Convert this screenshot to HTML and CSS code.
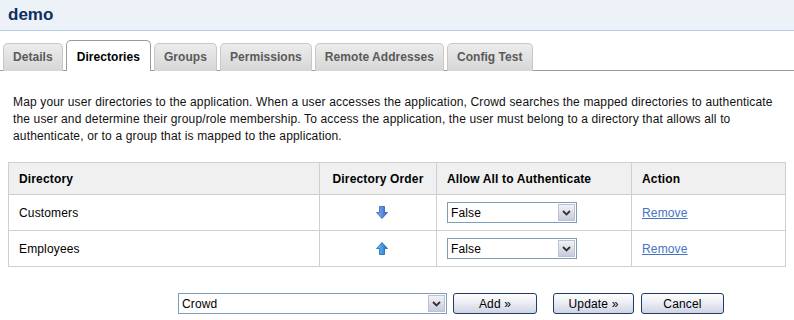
FILE: index.html
```html
<!DOCTYPE html>
<html lang="en">
<head>
  <meta charset="UTF-8" />
  <title>demo - Directories</title>
  <link rel="stylesheet" href="styles.css">
</head>
<body>
  <header class="title-bar">
    <h1>demo</h1>
  </header>

  <ul class="tabs">
    <li><a href="#">Details</a></li>
    <li class="active"><a href="#">Directories</a></li>
    <li><a href="#">Groups</a></li>
    <li><a href="#">Permissions</a></li>
    <li><a href="#">Remote Addresses</a></li>
    <li><a href="#">Config Test</a></li>
  </ul>

  <main>
    <p class="intro">Map your user directories to the application. When a user accesses the application, Crowd searches the mapped directories to authenticate the user and determine their group/role membership. To access the application, the user must belong to a directory that allows all to authenticate, or to a group that is mapped to the application.</p>

    <table class="dirs">
      <thead>
        <tr>
          <th class="col-name">Directory</th>
          <th class="col-order">Directory Order</th>
          <th class="col-allow">Allow All to Authenticate</th>
          <th class="col-action">Action</th>
        </tr>
      </thead>
      <tbody>
        <tr>
          <td>Customers</td>
          <td class="order">
            <svg width="12" height="13" viewBox="0 0 12 13">
              <defs>
                <linearGradient id="gdown" x1="0" y1="0" x2="1" y2="0">
                  <stop offset="0" stop-color="#8fb8ec"/>
                  <stop offset="1" stop-color="#2a64c4"/>
                </linearGradient>
              </defs>
              <path d="M3.5 0.5 H8.5 V6.5 H11.5 L6 12.5 L0.5 6.5 H3.5 Z" fill="url(#gdown)" stroke="#2b5fb5" stroke-width="0.8"/>
            </svg>
          </td>
          <td>
            <div class="select small">
              <select><option>False</option><option>True</option></select>
              <span class="select-btn"><svg width="9" height="6" viewBox="0 0 9 6"><path d="M1 1 L4.5 4.5 L8 1" fill="none" stroke="#333" stroke-width="1.8"/></svg></span>
            </div>
          </td>
          <td><a class="remove" href="#">Remove</a></td>
        </tr>
        <tr>
          <td>Employees</td>
          <td class="order">
            <svg width="12" height="13" viewBox="0 0 12 13">
              <defs>
                <linearGradient id="gup" x1="0" y1="0" x2="1" y2="0">
                  <stop offset="0" stop-color="#7cc4f2"/>
                  <stop offset="1" stop-color="#1670c8"/>
                </linearGradient>
              </defs>
              <path d="M6 0.5 L11.5 6.5 H8.5 V12.5 H3.5 V6.5 H0.5 Z" fill="url(#gup)" stroke="#1c63b0" stroke-width="0.8"/>
            </svg>
          </td>
          <td>
            <div class="select small">
              <select><option>False</option><option>True</option></select>
              <span class="select-btn"><svg width="9" height="6" viewBox="0 0 9 6"><path d="M1 1 L4.5 4.5 L8 1" fill="none" stroke="#333" stroke-width="1.8"/></svg></span>
            </div>
          </td>
          <td><a class="remove" href="#">Remove</a></td>
        </tr>
      </tbody>
    </table>

    <form class="add-form">
      <div class="select wide">
        <select><option>Crowd</option></select>
        <span class="select-btn"><svg width="9" height="6" viewBox="0 0 9 6"><path d="M1 1 L4.5 4.5 L8 1" fill="none" stroke="#333" stroke-width="1.8"/></svg></span>
      </div>
      <button type="button" class="btn btn-add">Add &raquo;</button>
      <button type="button" class="btn btn-update">Update &raquo;</button>
      <button type="button" class="btn btn-cancel">Cancel</button>
    </form>
  </main>
</body>
</html>
```

FILE: styles.css
```css
* {
  box-sizing: border-box;
  margin: 0;
  padding: 0;
}

body {
  font-family: 'Liberation Sans', Arial, sans-serif;
  font-size: 12px;
  letter-spacing: 0.15px;
  color: #000;
  background: #fff;
}

.title-bar {
  height: 31px;
  background: #edf1f8;
  border-bottom: 1px solid #b8cde6;
  padding: 0 8px;
  display: flex;
  align-items: center;
}

.title-bar h1 {
  font-size: 17px;
  font-weight: bold;
  letter-spacing: 0;
  color: #0b2f5e;
}

.tabs {
  list-style: none;
  display: flex;
  align-items: flex-end;
  height: 40px;
  padding-left: 3px;
  border-bottom: 1px solid #9a9a9a;
}

.tabs li {
  margin-right: 3px;
  margin-bottom: -1px;
}

.tabs a {
  display: block;
  height: 28px;
  line-height: 27px;
  padding: 0 9px;
  border: 1px solid #c8c8c8;
  border-bottom: none;
  border-radius: 5px 5px 0 0;
  background: linear-gradient(#ececec, #d6d6d6);
  color: #5a5a5a;
  font-weight: bold;
  letter-spacing: 0.05px;
  text-decoration: none;
}

.tabs li.active a {
  height: 31px;
  line-height: 33px;
  padding: 0 10px;
  background: #fff;
  border-color: #9a9a9a;
  color: #000;
}

main {
  padding: 0 8px;
}

.intro {
  padding: 23px 0 0 5px;
  line-height: 17px;
  color: #111;
}

.dirs {
  width: 100%;
  margin-top: 17px;
  border-collapse: collapse;
}

.dirs th,
.dirs td {
  border: 1px solid #cfcfcf;
  padding: 0 10px;
  text-align: left;
}

.dirs th {
  height: 32px;
  background: #f0f0f0;
  font-weight: bold;
}

.dirs td {
  height: 36px;
}

.dirs .col-name { width: 311px; }
.dirs .col-order { width: 117px; text-align: center; }
.dirs .col-allow { width: 195px; }

.dirs td.order {
  text-align: center;
  line-height: 0;
  padding-right: 2px;
}

.remove {
  color: #4473c2;
}

.select {
  display: flex;
  height: 21px;
  border: 1px solid #7f9db9;
  background: #fff;
}

.select select {
  flex: 1;
  appearance: none;
  -webkit-appearance: none;
  border: none;
  background: transparent;
  font-family: inherit;
  font-size: 12px;
  letter-spacing: 0.15px;
  padding-left: 3px;
  color: #000;
  outline: none;
}

.select-btn {
  width: 17px;
  margin: 1px;
  border: 1px solid #b9c3d6;
  background: linear-gradient(#f2f2f6, #c7cbdc);
  display: flex;
  align-items: center;
  justify-content: center;
}

.select.small {
  width: 130px;
}

.select.wide {
  width: 269px;
}

.add-form {
  display: flex;
  align-items: center;
  margin-top: 26px;
  padding-left: 170px;
}

.btn {
  height: 21px;
  border: 1px solid #1d3d66;
  border-radius: 3px;
  background: linear-gradient(#ffffff, #e9ebf3 50%, #cfd4e4);
  font-family: inherit;
  font-size: 12px;
  letter-spacing: 0.15px;
  color: #000;
  cursor: pointer;
}

.btn-add {
  width: 84px;
  margin-left: 6px;
}

.btn-update {
  width: 81px;
  margin-left: 16px;
}

.btn-cancel {
  width: 83px;
  margin-left: 7px;
}
```
